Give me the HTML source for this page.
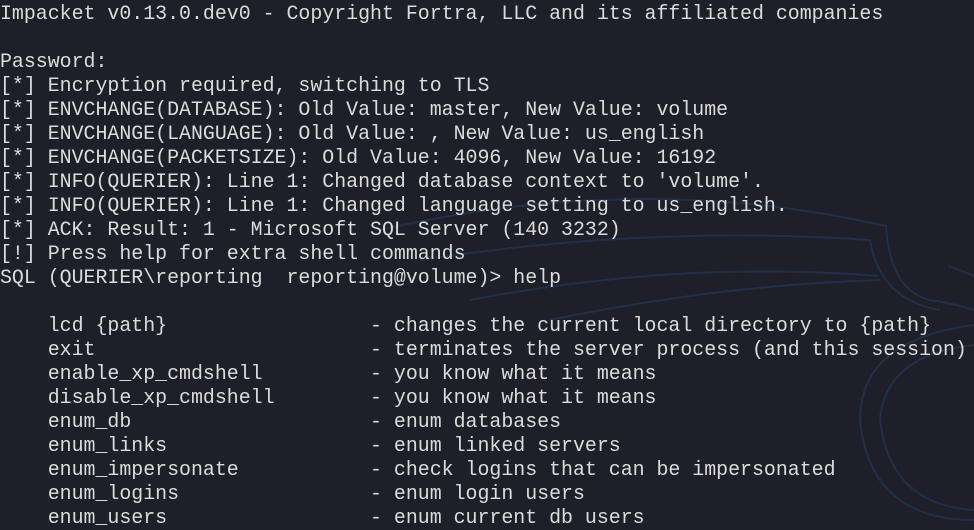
<!DOCTYPE html>
<html><head><style>
html,body{margin:0;padding:0;background:#1e1f29;width:974px;height:528px;overflow:hidden}
svg{position:absolute;left:0;top:0}
pre{position:absolute;left:0;top:2px;margin:0;font-family:"Liberation Mono",monospace;font-size:19.9px;line-height:24px;color:#dcdcdc;white-space:pre}
</style></head><body>
<svg width="974" height="528" fill="none" stroke="#25406a" stroke-width="2" opacity="0.5">
<path d="M380 230 Q640 170 886 226 Q890 290 930 300 Q960 305 974 310"/>
<path d="M420 260 Q650 225 870 240 Q880 300 940 310"/>
<path d="M470 300 Q680 260 878 276"/>
<path d="M550 320 Q720 285 880 280"/>
<path d="M974 520 Q870 520 860 420 Q860 340 974 325"/>
<path d="M974 510 Q890 505 880 420 Q885 355 974 345"/>
<path d="M948 266 Q965 272 974 276"/>
</svg>
<pre>Impacket v0.13.0.dev0 - Copyright Fortra, LLC and its affiliated companies

Password:
[*] Encryption required, switching to TLS
[*] ENVCHANGE(DATABASE): Old Value: master, New Value: volume
[*] ENVCHANGE(LANGUAGE): Old Value: , New Value: us_english
[*] ENVCHANGE(PACKETSIZE): Old Value: 4096, New Value: 16192
[*] INFO(QUERIER): Line 1: Changed database context to 'volume'.
[*] INFO(QUERIER): Line 1: Changed language setting to us_english.
[*] ACK: Result: 1 - Microsoft SQL Server (140 3232)
[!] Press help for extra shell commands
SQL (QUERIER\reporting  reporting@volume)&gt; help

    lcd {path}                 - changes the current local directory to {path}
    exit                       - terminates the server process (and this session)
    enable_xp_cmdshell         - you know what it means
    disable_xp_cmdshell        - you know what it means
    enum_db                    - enum databases
    enum_links                 - enum linked servers
    enum_impersonate           - check logins that can be impersonated
    enum_logins                - enum login users
    enum_users                 - enum current db users</pre>
</body></html>
